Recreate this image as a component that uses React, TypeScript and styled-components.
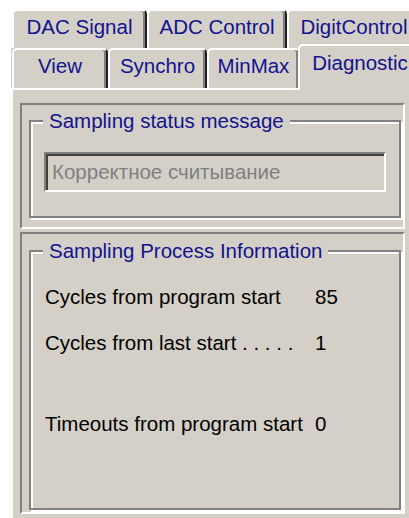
import styled, { createGlobalStyle } from "styled-components";

const face = "#d4d0c8";
const shadow = "#808080";
const darkShadow = "#202020";
const navy = "#12128e";

const GlobalStyle = createGlobalStyle`
  html, body {
    margin: 0;
    padding: 0;
    background: #fff;
  }
  body {
    font-family: "Liberation Sans", Arial, sans-serif;
  }
`;

const Window = styled.div`
  width: 409px;
  height: 518px;
  box-sizing: border-box;
  padding: 9px 0 0 11px;
  overflow: hidden;
  display: flex;
  flex-direction: column;
  font-family: "Liberation Sans", Arial, sans-serif;
  font-size: 20.5px;
`;

const TabRow = styled.div<{ $back?: boolean; $h: number }>`
  flex: none;
  display: flex;
  height: ${(p) => p.$h}px;
  padding-left: 1px;
  background: ${(p) => (p.$back ? face : "transparent")};
`;

const Tab = styled.div<{ $w: number; $h: number; $selected?: boolean }>`
  flex: none;
  box-sizing: border-box;
  width: ${(p) => p.$w}px;
  height: ${(p) => (p.$selected ? p.$h + 6 : p.$h)}px;
  margin: ${(p) => (p.$selected ? "-4px 0 -2px -2px" : "0")};
  position: ${(p) => (p.$selected ? "relative" : "static")};
  z-index: ${(p) => (p.$selected ? 1 : "auto")};
  padding-top: ${(p) => (p.$selected ? 5 : 4)}px;
  background: ${face};
  border-top: 2px solid #fff;
  border-left: 2px solid #fff;
  border-right: 2px solid ${darkShadow};
  border-radius: 5px 5px 0 0;
  box-shadow: inset -2px 0 0 ${shadow};
  color: ${navy};
  line-height: 24px;
  text-align: center;
  white-space: nowrap;
`;

const TabSheet = styled.div`
  flex: 1;
  display: flex;
  flex-direction: column;
  gap: 3px;
  padding: 13px 0 0 7px;
  background: ${face};
  border-top: 2px solid #fff;
  border-left: 2px solid #fff;
`;

const BevelPanel = styled.div<{ $h: number }>`
  flex: none;
  box-sizing: border-box;
  display: flex;
  flex-direction: column;
  width: 385px;
  height: ${(p) => p.$h}px;
  border: 2px solid;
  border-color: ${shadow} #fff #fff ${shadow};
`;

const GroupBox = styled.div<{ $top: number; $bottom: number }>`
  flex: 1;
  position: relative;
  margin: ${(p) => p.$top}px 2px ${(p) => p.$bottom}px 7px;
  border: 2px solid ${shadow};
  box-shadow: 2px 2px 0 #fff, inset 2px 2px 0 #fff;
`;

const Caption = styled.span`
  position: absolute;
  top: -13px;
  left: 12px;
  padding: 0 6px;
  background: ${face};
  color: ${navy};
  line-height: 24px;
  white-space: nowrap;
`;

const StatusEdit = styled.div`
  box-sizing: border-box;
  width: 342px;
  height: 40px;
  margin: 30px 0 0 13px;
  padding-left: 6px;
  border: 2px solid;
  border-color: ${shadow} #fff #fff ${shadow};
  box-shadow: inset 2px 2px 0 #404040;
  color: ${shadow};
  line-height: 36px;
  white-space: nowrap;
`;

const StatRow = styled.div<{ $space: number }>`
  display: grid;
  grid-template-columns: 270px auto;
  margin: ${(p) => p.$space}px 0 0 14px;
  color: #000;
  line-height: 24px;
  white-space: nowrap;
`;

const backTabs = [
  { label: "DAC Signal", w: 135 },
  { label: "ADC Control", w: 140 },
  { label: "DigitControl", w: 134 },
];

const frontTabs = [
  { label: "View", w: 96 },
  { label: "Synchro", w: 99 },
  { label: "MinMax", w: 93 },
  { label: "Diagnostic", w: 124, selected: true },
];

const stats = [
  { label: "Cycles from program start", value: "85", space: 33 },
  { label: "Cycles from last start . . . . .", value: "1", space: 22 },
  { label: "Timeouts from program start", value: "0", space: 57 },
];

export default function App() {
  return (
    <>
      <GlobalStyle />
      <Window>
        <TabRow $h={39}>
          {backTabs.map((t) => (
            <Tab key={t.label} $w={t.w} $h={39}>
              {t.label}
            </Tab>
          ))}
        </TabRow>
        <TabRow $h={40} $back>
          {frontTabs.map((t) => (
            <Tab key={t.label} $w={t.w} $h={40} $selected={t.selected}>
              {t.label}
            </Tab>
          ))}
        </TabRow>
        <TabSheet>
          <BevelPanel $h={126}>
            <GroupBox $top={15} $bottom={9}>
              <Caption>Sampling status message</Caption>
              <StatusEdit>Корректное считывание</StatusEdit>
            </GroupBox>
          </BevelPanel>
          <BevelPanel $h={282}>
            <GroupBox $top={16} $bottom={2}>
              <Caption>Sampling Process Information</Caption>
              {stats.map((s) => (
                <StatRow key={s.label} $space={s.space}>
                  <span>{s.label}</span>
                  <span>{s.value}</span>
                </StatRow>
              ))}
            </GroupBox>
          </BevelPanel>
        </TabSheet>
      </Window>
    </>
  );
}
